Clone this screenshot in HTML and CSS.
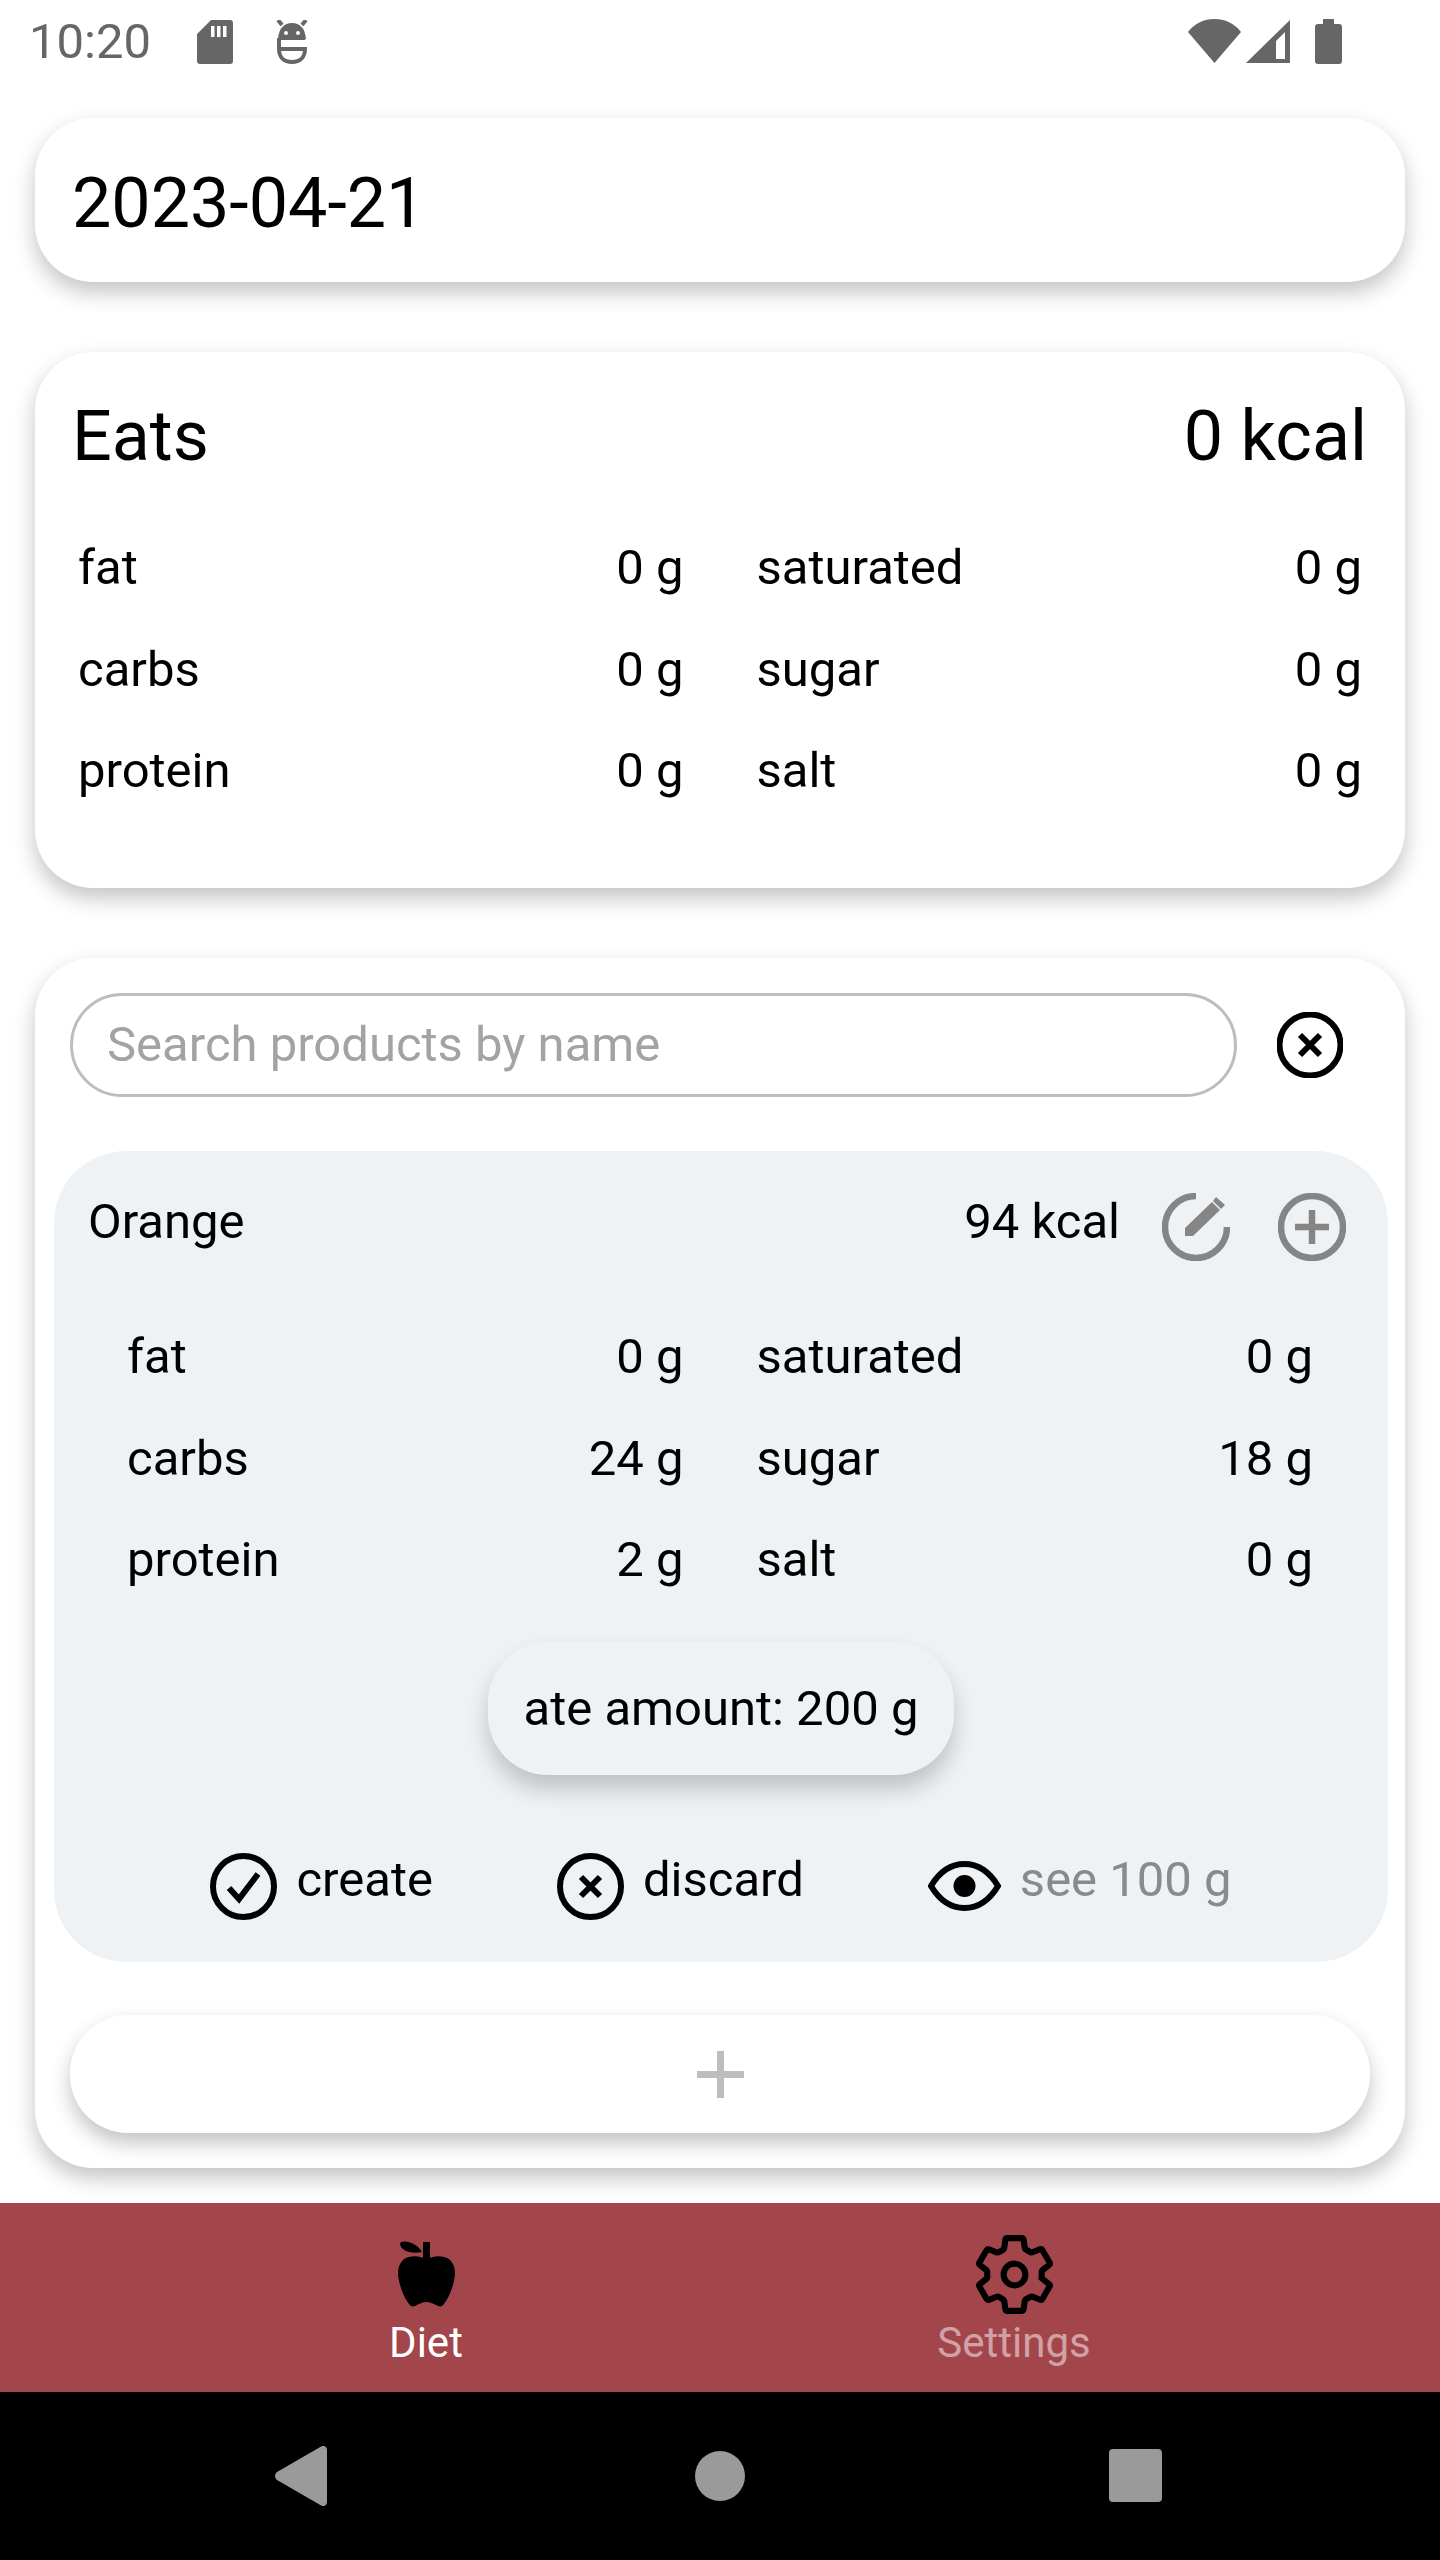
FILE: index.html
```html
<!DOCTYPE html>
<html lang="en">
<head>
    <meta charset="UTF-8">
    <meta name="viewport" content="width=device-width, initial-scale=1.0">
    <title>Diet</title>
    <link rel="stylesheet" href="styles.css">
</head>
<body>
    <div class="status-bar">
        <div class="status-left">
            <span class="clock">10:20</span>
            <svg class="sd-icon" viewBox="0 0 36 44"><path fill-rule="evenodd" d="M14 0H33a3 3 0 0 1 3 3V41a3 3 0 0 1-3 3H3a3 3 0 0 1-3-3V14ZM14 6v11h3.500V6ZM20 6v11h3.500V6ZM26 6v11h3.500V6Z"/></svg>
            <svg class="robot-icon" viewBox="0 0 32 44">
                <path d="M2 0l4 5M30 0l-4 5" class="robot-line"/>
                <path fill-rule="evenodd" d="M16 3C8 3 3 8 2 19H30C29 8 24 3 16 3ZM10 11a2 2 0 1 1 0 4 2 2 0 0 1 0-4ZM22 11a2 2 0 1 1 0 4 2 2 0 0 1 0-4Z"/>
                <path d="M3 18V29C3 37 8 42 16 42S29 37 29 29H3M3 18H29" class="robot-line"/>
            </svg>
        </div>
        <div class="status-right">
            <svg class="wifi-icon" viewBox="0 0 53 44"><path d="M0 13C7 4 16 0 26.500 0S46 4 53 13L26.500 44Z"/></svg>
            <svg class="signal-icon" viewBox="0 0 44 43"><path fill-rule="evenodd" d="M44 0V43H0ZM39 12 30 21V39H39Z"/></svg>
            <svg class="battery-icon" viewBox="0 0 27 45"><path d="M8 0H19V5H24a3 3 0 0 1 3 3V42a3 3 0 0 1-3 3H3a3 3 0 0 1-3-3V8a3 3 0 0 1 3-3H8Z"/></svg>
        </div>
    </div>

    <div class="content">
        <div class="card date-card">2023-04-21</div>

        <div class="card eats-card">
            <div class="eats-head">
                <span>Eats</span>
                <span>0 kcal</span>
            </div>
            <div class="macros">
                <div class="macro"><span>fat</span><span>0 g</span></div>
                <div class="macro"><span>saturated</span><span>0 g</span></div>
                <div class="macro"><span>carbs</span><span>0 g</span></div>
                <div class="macro"><span>sugar</span><span>0 g</span></div>
                <div class="macro"><span>protein</span><span>0 g</span></div>
                <div class="macro"><span>salt</span><span>0 g</span></div>
            </div>
        </div>

        <div class="card search-card">
            <div class="search-row">
                <div class="search-input">Search products by name</div>
                <svg class="close-icon" viewBox="0 0 66 66">
                    <circle cx="33" cy="33" r="30.500" class="line-black"/>
                    <path d="M23 23 43 43M43 23 23 43" class="line-black"/>
                </svg>
            </div>

            <div class="product">
                <div class="product-head">
                    <span class="product-name">Orange</span>
                    <span class="product-kcal">94 kcal</span>
                    <svg class="edit-icon" viewBox="0 0 68 68">
                        <path d="M34 3A31 31 0 1 0 65 34" class="line-grey"/>
                        <path d="M23 35 50 9 58 17 31 43H23ZM54 4 63 12 59 16 51 8Z" class="fill-grey"/>
                    </svg>
                    <svg class="plus-icon" viewBox="0 0 68 68">
                        <circle cx="34" cy="34" r="31" class="line-grey"/>
                        <path d="M17 34H51M34 17V51" class="line-grey"/>
                    </svg>
                </div>
                <div class="macros macros-inner">
                    <div class="macro"><span>fat</span><span>0 g</span></div>
                    <div class="macro"><span>saturated</span><span>0 g</span></div>
                    <div class="macro"><span>carbs</span><span>24 g</span></div>
                    <div class="macro"><span>sugar</span><span>18 g</span></div>
                    <div class="macro"><span>protein</span><span>2 g</span></div>
                    <div class="macro"><span>salt</span><span>0 g</span></div>
                </div>
                <div class="amount-pill">ate amount: 200 g</div>
                <div class="actions">
                    <div class="action">
                        <svg class="action-icon" viewBox="0 0 67 67">
                            <circle cx="33.500" cy="33.500" r="30.500" class="line-black"/>
                            <path d="M19 35 29 46 48 21" class="line-black"/>
                        </svg>
                        <span>create</span>
                    </div>
                    <div class="action">
                        <svg class="action-icon" viewBox="0 0 67 67">
                            <circle cx="33.500" cy="33.500" r="30.500" class="line-black"/>
                            <path d="M24 24 43 43M43 24 24 43" class="line-black"/>
                        </svg>
                        <span>discard</span>
                    </div>
                    <div class="action">
                        <svg class="eye-icon" viewBox="0 0 73 50">
                            <path d="M3 25C12 10 24 3 36.500 3S61 10 70 25C61 40 49 47 36.500 47S12 40 3 25Z" class="line-black"/>
                            <circle cx="36.500" cy="25" r="11"/>
                        </svg>
                        <span class="muted">see 100 g</span>
                    </div>
                </div>
            </div>

            <div class="add-button"><span class="add-plus"></span></div>
        </div>
    </div>

    <div class="tabs">
        <div class="tab">
            <svg class="apple-icon" viewBox="0 0 57 67">
                <path d="M25 2H32V20H25Z"/>
                <path d="M2 3C7-1 20 4 24 12 16 14 2 12 2 3Z"/>
                <path d="M28.500 20C23 15 10 15 5 20 0 25-1 32 1 41 3 50 8 62 13 66 17 68 21 62 28.500 62 36 62 40 68 44 66 49 62 54 50 56 41 58 32 57 25 52 20 47 15 34 15 28.500 20Z"/>
            </svg>
            <span class="tab-label">Diet</span>
        </div>
        <div class="tab">
            <svg class="gear-icon" viewBox="0 0 512 512">
                <path d="M262.290 192.310a64 64 0 1 0 57.400 57.400 64.130 64.130 0 0 0-57.400-57.400zM416.390 256a154.340 154.340 0 0 1-1.530 20.790l45.210 35.460a10.810 10.810 0 0 1 2.450 13.750l-42.770 74a10.810 10.810 0 0 1-13.140 4.590l-44.900-18.080a16.110 16.110 0 0 0-15.170 1.750A164.480 164.480 0 0 1 325 400.800a15.940 15.940 0 0 0-8.820 12.140l-6.730 47.890a11.080 11.080 0 0 1-10.680 9.170h-85.540a11.110 11.110 0 0 1-10.690-8.870l-6.720-47.820a16.070 16.070 0 0 0-9-12.220 155.300 155.300 0 0 1-21.460-12.570 16 16 0 0 0-15.110-1.710l-44.890 18.070a10.810 10.810 0 0 1-13.140-4.580l-42.770-74a10.800 10.800 0 0 1 2.450-13.750l38.210-30a16.050 16.050 0 0 0 6-14.080c-.36-4.170-.58-8.330-.58-12.500s.21-8.270.58-12.350a16 16 0 0 0-6.070-13.940l-38.190-30A10.810 10.810 0 0 1 49.480 186l42.770-74a10.810 10.810 0 0 1 13.140-4.590l44.900 18.080a16.110 16.110 0 0 0 15.170-1.750A164.480 164.480 0 0 1 187 111.200a15.940 15.940 0 0 0 8.820-12.140l6.730-47.890A11.080 11.080 0 0 1 213.230 42h85.540a11.110 11.110 0 0 1 10.690 8.870l6.720 47.820a16.070 16.070 0 0 0 9 12.220 155.300 155.300 0 0 1 21.460 12.570 16 16 0 0 0 15.110 1.710l44.890-18.070a10.810 10.810 0 0 1 13.140 4.580l42.770 74a10.800 10.800 0 0 1-2.450 13.750l-38.210 30a16.050 16.050 0 0 0-6.070 14.080c.33 4.140.55 8.300.55 12.470z"/>
            </svg>
            <span class="tab-label tab-label-off">Settings</span>
        </div>
    </div>

    <div class="system-nav">
        <svg class="sys-back" viewBox="0 0 52 60"><path d="M47 0a4 4 0 0 1 5 4V56a4 4 0 0 1-5 4L2 34a5 5 0 0 1 0-8Z"/></svg>
        <span class="sys-home"></span>
        <span class="sys-recent"></span>
    </div>
</body>
</html>
```

FILE: styles.css
```css
* {
    box-sizing: border-box;
}
body {
    margin: 0;
    width: 1440px;
    height: 2560px;
    overflow: hidden;
    font-family: Roboto, sans-serif;
    font-size: 49px;
    color: #000;
    background: #fff;
    display: flex;
    flex-direction: column;
}

/* status bar */
.status-bar {
    height: 118px;
    padding: 19px 98px 0 29px;
    display: flex;
    justify-content: space-between;
    align-items: flex-start;
}
.status-left,
.status-right {
    display: flex;
    align-items: flex-start;
}
.status-bar svg {
    fill: #666;
    display: block;
}
.clock {
    font-size: 49px;
    line-height: 46px;
    color: #666;
    width: 168px;
}
.sd-icon {
    width: 36px;
    height: 44px;
    margin-top: 1px;
}
.robot-icon {
    width: 32px;
    height: 44px;
    margin-top: 1px;
    margin-left: 43px;
}
.robot-line {
    fill: none;
    stroke: #666;
    stroke-width: 4;
}
.wifi-icon {
    width: 53px;
    height: 44px;
}
.signal-icon {
    width: 44px;
    height: 43px;
    margin-top: 1px;
    margin-left: 5px;
}
.battery-icon {
    width: 27px;
    height: 45px;
    margin-left: 25px;
}

/* cards */
.content {
    flex: 1;
    padding: 0 35px;
}
.card {
    background: #fff;
    border-radius: 58px;
    box-shadow: 0 10px 22px rgba(0, 0, 0, 0.24);
}
.date-card {
    height: 164px;
    padding: 6px 37px 0;
    margin-bottom: 70px;
    font-size: 70px;
    display: flex;
    align-items: center;
}
.eats-card {
    height: 536px;
    padding: 42px 38px 0 37px;
    margin-bottom: 70px;
}
.eats-head {
    height: 84px;
    font-size: 70px;
    line-height: 84px;
    display: flex;
    justify-content: space-between;
}
.macros {
    margin: 39px 5px 0 6px;
    display: grid;
    grid-template-columns: 1fr 1fr;
    column-gap: 73px;
}
.macro {
    height: 101.500px;
    line-height: 101.500px;
    display: flex;
    justify-content: space-between;
}

/* search card */
.search-card {
    height: 1210px;
    padding: 35px 17px 0 19px;
}
.search-row {
    margin: 0 18px 0 16px;
    display: flex;
    align-items: center;
}
.search-input {
    flex: 1;
    height: 104px;
    padding-left: 34px;
    border: 3px solid #bdbdbd;
    border-radius: 52px;
    color: #a3a3a3;
    line-height: 98px;
}
.close-icon {
    width: 66px;
    height: 66px;
    margin: 0 27px 0 40px;
}
.line-black {
    fill: none;
    stroke: #000;
    stroke-width: 6;
}
.line-grey {
    fill: none;
    stroke: #858585;
    stroke-width: 6.500;
}
.fill-grey {
    fill: #858585;
}

/* product */
.product {
    height: 811px;
    margin-top: 54px;
    padding-top: 40px;
    background: #eff2f5;
    border-radius: 72px;
}
.product-head {
    height: 72px;
    padding: 0 42px 0 34px;
    display: flex;
    align-items: center;
}
.product-name {
    flex: 1;
    padding-bottom: 12px;
}
.product-kcal {
    padding-bottom: 12px;
}
.edit-icon {
    width: 68px;
    height: 68px;
    margin-left: 42px;
}
.plus-icon {
    width: 68px;
    height: 68px;
    margin-left: 48px;
}
.macros-inner {
    margin: 43px 75px 0 73px;
}
.amount-pill {
    width: 466px;
    height: 133px;
    margin: 31px auto 0;
    background: #eff2f5;
    border-radius: 60px;
    box-shadow: 0 14px 22px rgba(0, 0, 0, 0.2);
    text-align: center;
    line-height: 133px;
}
.actions {
    margin-top: 78px;
    display: flex;
    justify-content: center;
    align-items: center;
    column-gap: 124px;
}
.action {
    display: flex;
    align-items: center;
    height: 67px;
}
.action span {
    margin-left: 19px;
    padding-bottom: 14px;
}
.action-icon {
    width: 67px;
    height: 67px;
}
.eye-icon {
    width: 73px;
    height: 50px;
}
.muted {
    color: #8a8a8a;
}
.add-button {
    height: 118px;
    margin: 53px 18px 0 16px;
    border-radius: 58px;
    background: #fff;
    box-shadow: 0 10px 20px rgba(0, 0, 0, 0.24);
    display: flex;
    align-items: center;
    justify-content: center;
}
.add-plus {
    width: 47px;
    height: 47px;
    background:
        linear-gradient(#bdbdbd, #bdbdbd) center / 100% 7px no-repeat,
        linear-gradient(#bdbdbd, #bdbdbd) center / 7px 100% no-repeat;
}

/* bottom tabs */
.tabs {
    height: 189px;
    padding: 0 132px;
    background: #a3464c;
    display: flex;
}
.tab {
    flex: 1;
    position: relative;
    display: flex;
    flex-direction: column;
    align-items: center;
}
.apple-icon {
    width: 57px;
    height: 67px;
    margin-top: 37px;
}
.gear-icon {
    width: 87px;
    height: 87px;
    margin-top: 28px;
    fill: none;
    stroke: #000;
    stroke-width: 36;
}
.tab-label {
    position: absolute;
    top: 115px;
    font-size: 42px;
    line-height: 50px;
    color: #fff;
}
.tab-label-off {
    color: rgba(255, 255, 255, 0.5);
}

/* android nav */
.system-nav {
    height: 168px;
    background: #000;
    position: relative;
}
.sys-back {
    position: absolute;
    left: 275px;
    top: 54px;
    width: 52px;
    height: 60px;
    fill: #9a9a9a;
}
.sys-home {
    position: absolute;
    left: 695px;
    top: 59px;
    width: 50px;
    height: 50px;
    border-radius: 50%;
    background: #9a9a9a;
}
.sys-recent {
    position: absolute;
    left: 1109px;
    top: 57px;
    width: 53px;
    height: 53px;
    border-radius: 4px;
    background: #9a9a9a;
}
```
